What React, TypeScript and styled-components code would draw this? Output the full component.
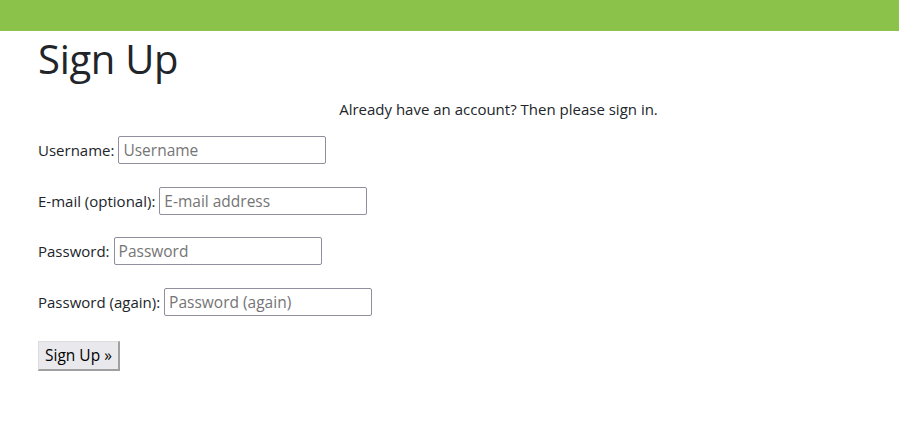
import React from 'react';
import styled, { createGlobalStyle } from 'styled-components';

const GlobalStyle = createGlobalStyle`
  html, body {
    margin: 0;
    padding: 0;
    background: #ffffff;
  }
  body {
    font-family: 'Open Sans', 'Noto Sans', sans-serif;
    color: #212529;
  }
`;

const TopBar = styled.div`
  height: 31px;
  background: #8bc34a;
`;

const Container = styled.main`
  display: flex;
  flex-direction: column;
  padding: 0 38px;
`;

const PageTitle = styled.h1`
  margin: 4px 0 0 0;
  font-size: 40px;
  font-weight: 400;
  line-height: 48px;
  letter-spacing: -0.3px;
`;

const Intro = styled.p`
  margin: 15px 0 0 0;
  padding-left: 98px;
  text-align: center;
  font-size: 15px;
  line-height: 22px;
`;

const SignupForm = styled.form`
  display: flex;
  flex-direction: column;
  align-items: flex-start;
  gap: 22.7px;
  margin-top: 16px;
`;

const Row = styled.div`
  display: flex;
  align-items: center;
  gap: 4px;
  height: 28px;
  font-size: 15px;
`;

const Label = styled.label`
  white-space: nowrap;
`;

const TextInput = styled.input`
  box-sizing: border-box;
  width: 208px;
  height: 28px;
  padding: 2px 4px;
  border: 1px solid #8f8f9d;
  border-radius: 2px;
  font-family: inherit;
  font-size: 15.5px;
  color: #212529;
  background: #ffffff;

  &::placeholder {
    color: #757575;
  }
`;

const SubmitButton = styled.button`
  box-sizing: border-box;
  margin-top: 2px;
  height: 30px;
  padding: 0 6px;
  font-family: inherit;
  font-size: 15.5px;
  color: #000000;
  background: #e9e9ed;
  border-style: solid;
  border-width: 1px 2px 2px 1px;
  border-color: #dcdcdc #a0a0a0 #a0a0a0 #dcdcdc;
  border-radius: 0;
`;

const fields = [
  { label: 'Username:', name: 'username', type: 'text', placeholder: 'Username' },
  { label: 'E-mail (optional):', name: 'email', type: 'email', placeholder: 'E-mail address' },
  { label: 'Password:', name: 'password1', type: 'password', placeholder: 'Password' },
  { label: 'Password (again):', name: 'password2', type: 'password', placeholder: 'Password (again)' },
];

const App: React.FC = () => {
  return (
    <>
      <GlobalStyle />
      <TopBar />
      <Container>
        <PageTitle>Sign Up</PageTitle>
        <Intro>Already have an account? Then please sign in.</Intro>
        <SignupForm onSubmit={(e) => e.preventDefault()}>
          {fields.map((f) => (
            <Row key={f.name}>
              <Label htmlFor={f.name}>{f.label}</Label>
              <TextInput id={f.name} name={f.name} type={f.type} placeholder={f.placeholder} />
            </Row>
          ))}
          <SubmitButton type="submit">Sign Up »</SubmitButton>
        </SignupForm>
      </Container>
    </>
  );
};

export default App;
